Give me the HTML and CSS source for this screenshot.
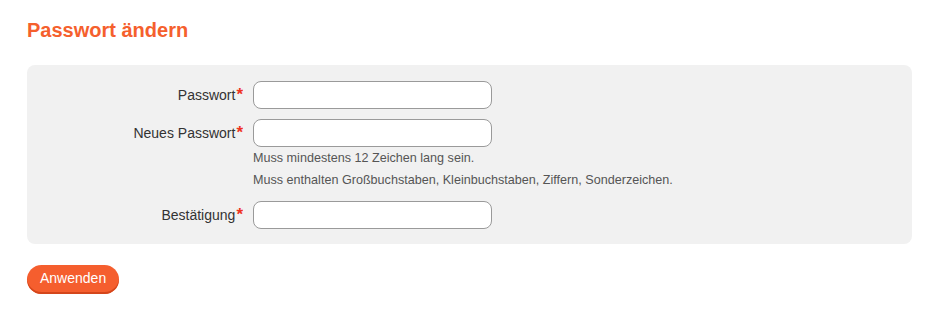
FILE: index.html
```html
<!DOCTYPE html>
<html lang="de">
<head>
<meta charset="utf-8">
<title>Passwort ändern</title>
<link rel="stylesheet" href="styles.css">
</head>
<body>
<div class="page">
  <h1 class="title">Passwort ändern</h1>
  <form class="panel">
    <label class="label" for="pw">Passwort<span class="req">*</span></label>
    <div class="field"><input class="input" id="pw" type="password"></div>

    <label class="label" for="npw">Neues Passwort<span class="req">*</span></label>
    <div class="field">
      <input class="input" id="npw" type="password">
      <div class="hints">
        <div class="hint">Muss mindestens 12 Zeichen lang sein.</div>
        <div class="hint">Muss enthalten Großbuchstaben, Kleinbuchstaben, Ziffern, Sonderzeichen.</div>
      </div>
    </div>

    <label class="label" for="cpw">Bestätigung<span class="req">*</span></label>
    <div class="field"><input class="input" id="cpw" type="password"></div>
  </form>
  <button class="btn" type="button">Anwenden</button>
</div>
</body>
</html>
```

FILE: styles.css
```css
html, body {
  margin: 0;
  padding: 0;
  background: #ffffff;
  font-family: "Liberation Sans", Arial, sans-serif;
}

.page {
  padding: 0 27px;
}

.title {
  margin: 0;
  padding-top: 18px;
  font-size: 20px;
  line-height: 24px;
  font-weight: bold;
  color: #f5602d;
}

.panel {
  margin-top: 23px;
  background: #f1f1f1;
  border-radius: 8px;
  padding: 16px 0 15px 0;
  display: grid;
  grid-template-columns: 216px 239px;
  column-gap: 10px;
  row-gap: 10px;
  align-items: start;
}

.label {
  height: 28px;
  line-height: 28px;
  text-align: right;
  font-size: 14px;
  color: #333333;
  overflow: hidden;
}

.req {
  color: #ee3322;
  font-size: 17px;
  font-weight: bold;
  line-height: 0;
  margin-left: 1px;
}

.field {
  display: flex;
  flex-direction: column;
}

.input {
  box-sizing: border-box;
  width: 239px;
  height: 28px;
  margin: 0;
  border: 1px solid #9a9a9a;
  border-radius: 8px;
  background: #ffffff;
  outline: none;
}

.hints {
  width: 600px;
}

.hint {
  font-size: 12.6px;
  line-height: 22px;
  color: #555555;
  white-space: nowrap;
}

.btn {
  margin-top: 21px;
  height: 29px;
  padding: 0 13px 2px 13px;
  border: none;
  border-radius: 15px;
  background: #f55e2e;
  box-shadow: inset 0 -2px 0 #d4461b;
  color: #ffffff;
  font-family: "Liberation Sans", Arial, sans-serif;
  font-size: 14px;
  line-height: 27px;
  cursor: pointer;
}
```
